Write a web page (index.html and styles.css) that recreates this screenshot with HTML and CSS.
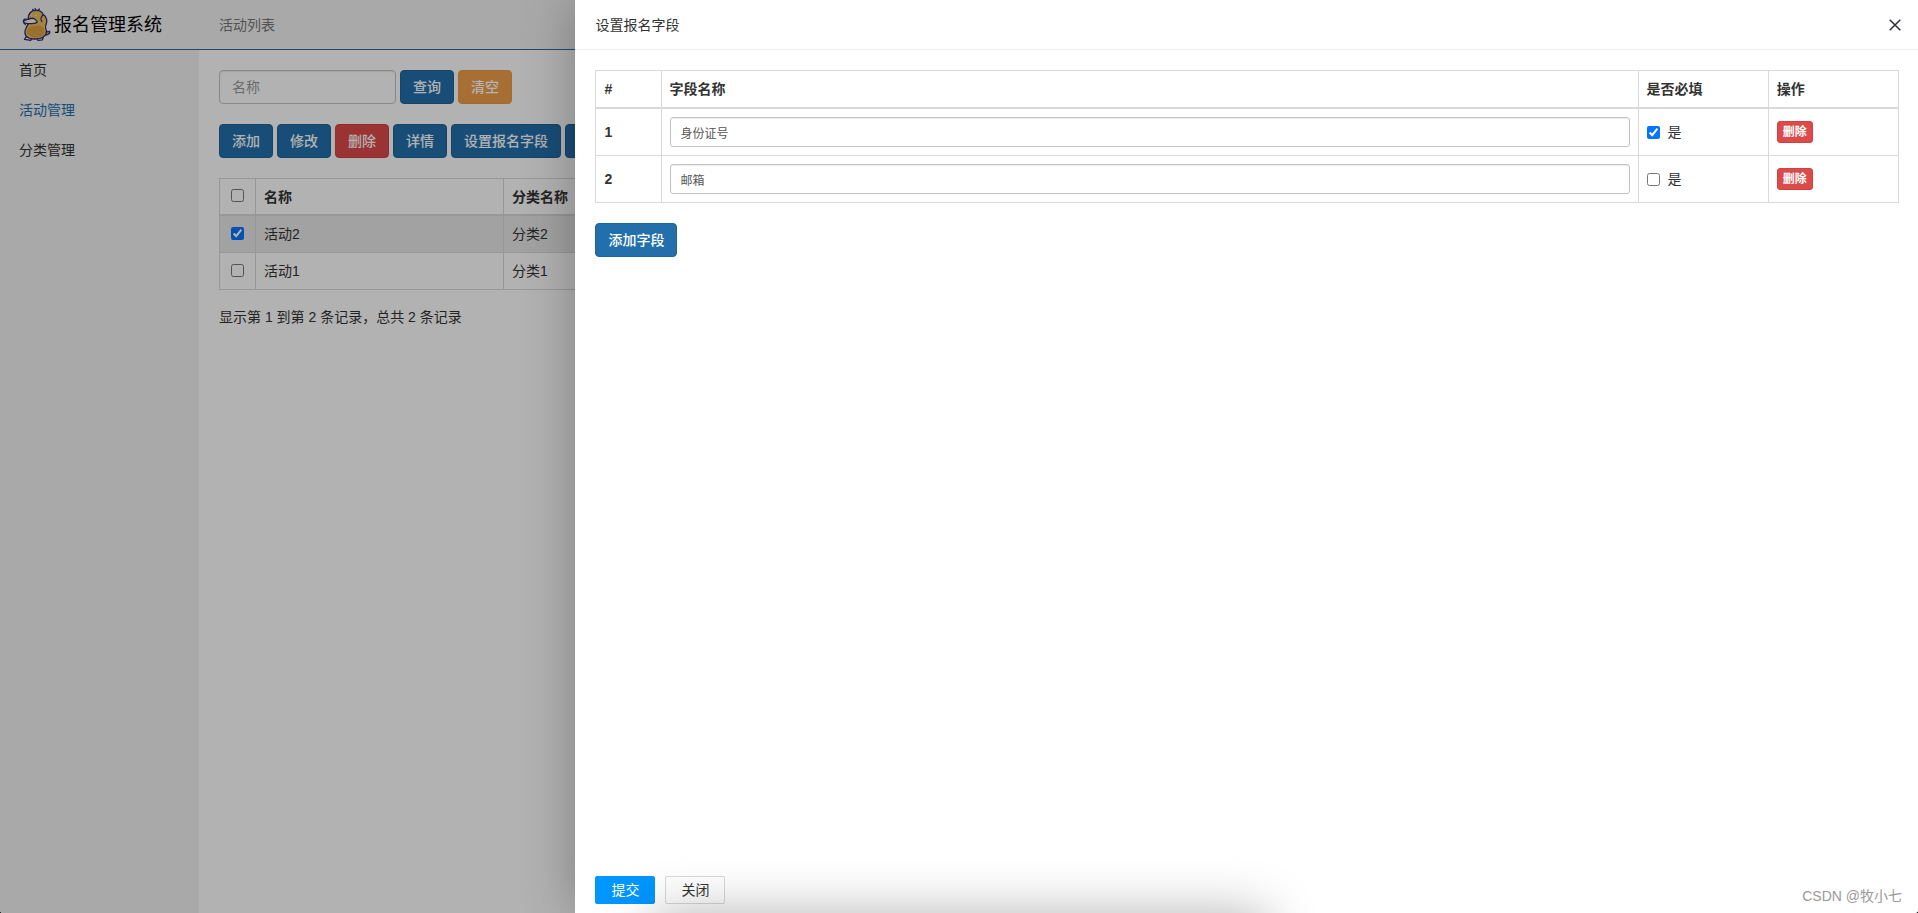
FILE: index.html
```html
<!DOCTYPE html>
<html lang="zh-CN">
<head>
<meta charset="utf-8">
<title>报名管理系统</title>
<link rel="stylesheet" href="styles.css">
</head>
<body>
<div class="app">
  <header class="topbar">
    <div class="brand">
      <svg class="brand-logo" viewBox="0 0 30 36" aria-hidden="true">
        <g stroke="#242c78" stroke-width="1.300" stroke-linecap="round" stroke-linejoin="round">
          <path fill="none" d="M13.500 4L11 2.500M14.500 3.500L13.500 1.500M15.500 4L18 2"/>
          <path fill="#eebb55" d="M23 29C27 29 29.500 27 28.500 25C26 27 25 24 24 24Z"/>
          <path fill="#fff" d="M4 31L2.500 33.500L6 34L9 34.500L11 31ZM15 32L16.500 34.500L21 34L22 31Z"/>
          <path fill="#f0bd58" d="M6.500 13C6 6.500 9.500 3.500 14.500 3.500C19 3.500 21 5 22 8C24 8 24.500 10 25.500 13C26.500 17 23.500 18.500 24.500 22C27 28 23 33 13 33C4 33 1.500 28 4 22C5 19.500 6 18 7 17Z"/>
          <path fill="#dfa045" stroke="none" d="M5 25C6 19 12 20 17 19C22 19 24.500 24 22.500 29C17 33 5 32.500 5 25Z"/>
          <path fill="#fff0d0" d="M7 12.500C9 11.500 12 11 14 13C17 15 16 16.500 12.500 16.800C8 17.500 2 17 1.500 15.500C1.500 13.500 4 13.500 7 12.500Z"/>
          <path fill="none" d="M22 8C19.500 10 19 13 20.500 15M3.500 18C1 16 .8 13.500 2.500 12.500L4.500 12.500"/>
        </g>
        <circle cx="9" cy="9.500" r="1" fill="#fff"/><circle cx="14.500" cy="9.500" r="1" fill="#fff"/>
        <circle cx="9" cy="9.500" r=".5"/><circle cx="14.500" cy="9.500" r=".5"/>
      </svg>
      <span>报名管理系统</span>
    </div>
    <div class="crumb">活动列表</div>
  </header>
  <div class="body">
    <nav class="sidebar">
      <a href="#">首页</a>
      <a href="#" class="active">活动管理</a>
      <a href="#">分类管理</a>
    </nav>
    <main class="main">
      <form class="bar">
        <input class="field search" type="text" placeholder="名称" aria-label="名称">
        <button type="button" class="btn">查询</button>
        <button type="button" class="btn warning">清空</button>
      </form>
      <div class="bar">
        <button type="button" class="btn">添加</button>
        <button type="button" class="btn">修改</button>
        <button type="button" class="btn danger">删除</button>
        <button type="button" class="btn">详情</button>
        <button type="button" class="btn">设置报名字段</button>
        <button type="button" class="btn more"></button>
      </div>
      <table class="grid list">
        <colgroup><col class="c-check"><col class="c-name"><col></colgroup>
        <thead>
          <tr><th><input type="checkbox"></th><th>名称</th><th>分类名称</th></tr>
        </thead>
        <tbody>
          <tr class="selected"><td><input type="checkbox" checked></td><td>活动2</td><td>分类2</td></tr>
          <tr><td><input type="checkbox"></td><td>活动1</td><td>分类1</td></tr>
        </tbody>
      </table>
      <p class="total">显示第 1 到第 2 条记录，总共 2 条记录</p>
    </main>
  </div>
  <div class="shade"></div>
  <section class="drawer">
    <header class="drawer-head">
      <h2>设置报名字段</h2>
      <button type="button" class="close" aria-label="关闭">
        <svg viewBox="0 0 12 12"><path d="M.7.700L11.300 11.300M11.300.700L.7 11.300" fill="none" stroke="#2d2f36" stroke-width="1.500"/></svg>
      </button>
    </header>
    <div class="drawer-body">
      <table class="grid fields">
        <colgroup><col class="c-no"><col><col class="c-tenth"><col class="c-tenth"></colgroup>
        <thead>
          <tr><th>#</th><th>字段名称</th><th>是否必填</th><th>操作</th></tr>
        </thead>
        <tbody>
          <tr>
            <th>1</th>
            <td><input class="field small" type="text" value="身份证号" aria-label="字段名称"></td>
            <td><label class="check"><input type="checkbox" checked>是</label></td>
            <td><button type="button" class="btn danger tiny">删除</button></td>
          </tr>
          <tr>
            <th>2</th>
            <td><input class="field small" type="text" value="邮箱" aria-label="字段名称"></td>
            <td><label class="check"><input type="checkbox">是</label></td>
            <td><button type="button" class="btn danger tiny">删除</button></td>
          </tr>
        </tbody>
      </table>
      <button type="button" class="btn">添加字段</button>
    </div>
    <footer class="drawer-foot">
      <button type="button" class="action submit">提交</button>
      <button type="button" class="action">关闭</button>
    </footer>
  </section>
  <div class="sheet"></div>
  <div class="mark">CSDN @牧小七</div>
</div>
</body>
</html>
```

FILE: styles.css
```css
* { box-sizing: border-box; }
html { background: #000; }
body {
  margin: 0;
  color: #333;
  font: 14px/20px "Liberation Sans", "Noto Sans CJK SC", sans-serif;
}
button, input { font: inherit; color: inherit; }

.app {
  position: relative;
  display: flex;
  flex-direction: column;
  height: 100vh;
  overflow: hidden;
  border-radius: 0 0 3px 3px;
  background: #fff;
}
.topbar {
  display: flex;
  align-items: center;
  height: 50px;
  border-bottom: 1px solid #236fac;
  background: #f2f2f2;
}
.brand {
  display: flex;
  align-items: center;
  gap: 3px;
  width: 219px;
  padding-left: 22px;
  color: #000;
  font-size: 18px;
}
.brand-logo { width: 29px; height: 35px; }
.crumb { color: #777; }
.body { display: flex; flex: 1; min-height: 0; }
.sidebar { width: 199px; background: #f2f2f2; }
.sidebar a {
  display: block;
  padding-left: 19px;
  color: #333;
  line-height: 40px;
  text-decoration: none;
}
.sidebar .active { color: #236fac; }
.main { flex: 1; min-width: 0; padding: 20px; }

.bar { display: flex; gap: 4px; margin-bottom: 20px; }
.field {
  height: 34px;
  padding: 0 12px;
  border: 1px solid #c4c4c4;
  border-radius: 4px;
  background: #fff;
  box-shadow: inset 0 1px 1px rgba(0, 0, 0, .08);
}
.field::placeholder { color: #999; opacity: 1; }
.search { width: 177px; }
.small {
  display: block;
  width: 100%;
  height: 30px;
  padding: 0 10px;
  border-radius: 3px;
  color: #555;
  font-size: 12px;
}
.btn {
  height: 34px;
  padding: 0 12px;
  border: 1px solid #1f6399;
  border-radius: 4px;
  background: #236fac;
  color: #fff;
  font-weight: 500;
}
.warning { border-color: #ee9a40; background: #f0a04b; }
.danger { border-color: #d43f3f; background: #dd4a4a; }
.more { width: 110px; }
.tiny {
  display: block;
  height: 22px;
  padding: 0 5px;
  border-radius: 3px;
  font-size: 12px;
  font-weight: 700;
  line-height: 18px;
}

.grid {
  width: 100%;
  border-collapse: collapse;
  table-layout: fixed;
}
.grid th, .grid td {
  padding: 8px;
  border: 1px solid #d9d9d9;
  text-align: left;
  vertical-align: middle;
}
.grid thead th { border-bottom-width: 2px; }
.grid input[type="checkbox"] { width: 13px; height: 13px; margin: 0; }
.list thead th { padding-bottom: 7px; }
.list th:first-child, .list td:first-child { padding: 0 0 4px; text-align: center; }
.list input { vertical-align: middle; }
.list .c-check { width: 36px; }
.list .c-name { width: 248px; }
.selected { background: #e9e9e9; }
.total { margin: 17px 0 0; }

.shade {
  position: absolute;
  inset: 0;
  background: rgba(0, 0, 0, .3);
}
.drawer {
  position: absolute;
  top: 0;
  right: 0;
  bottom: 0;
  display: flex;
  flex-direction: column;
  width: 70%;
  background: #fff;
  box-shadow: 1px 1px 50px rgba(0, 0, 0, .3);
}
.drawer-head {
  display: flex;
  align-items: center;
  justify-content: space-between;
  height: 50px;
  padding: 0 17px 0 20px;
  border-bottom: 1px solid #eee;
}
.drawer-head h2 { margin: 0; font-size: 14px; font-weight: 400; }
.close {
  width: 12px;
  height: 12px;
  padding: 0;
  border: 0;
  background: none;
}
.close svg { display: block; }
.drawer-body { flex: 1; padding: 20px 19px 20px 20px; }
.fields { margin-bottom: 20px; }
.fields .c-no { width: 5%; }
.fields .c-tenth { width: 10%; }
.check { display: flex; align-items: center; gap: 8px; }
.drawer-foot { display: flex; gap: 10px; padding: 0 20px 9px; }
.action {
  width: 60px;
  height: 28px;
  padding: 0;
  border: 1px solid #d9d9d9;
  border-radius: 2px;
  background: transparent;
}
.submit { border-color: #0096ff; background: #0096ff; color: #fff; }

/* Closed sheet parked under the window: only its shadow shows. */
.sheet {
  position: absolute;
  top: 100%;
  left: 34%;
  width: 32%;
  height: 200px;
  box-shadow: 1px 1px 50px rgba(0, 0, 0, .3);
}
.mark {
  position: absolute;
  right: 16px;
  bottom: 7px;
  color: #999;
  font-size: 14px;
}
```
